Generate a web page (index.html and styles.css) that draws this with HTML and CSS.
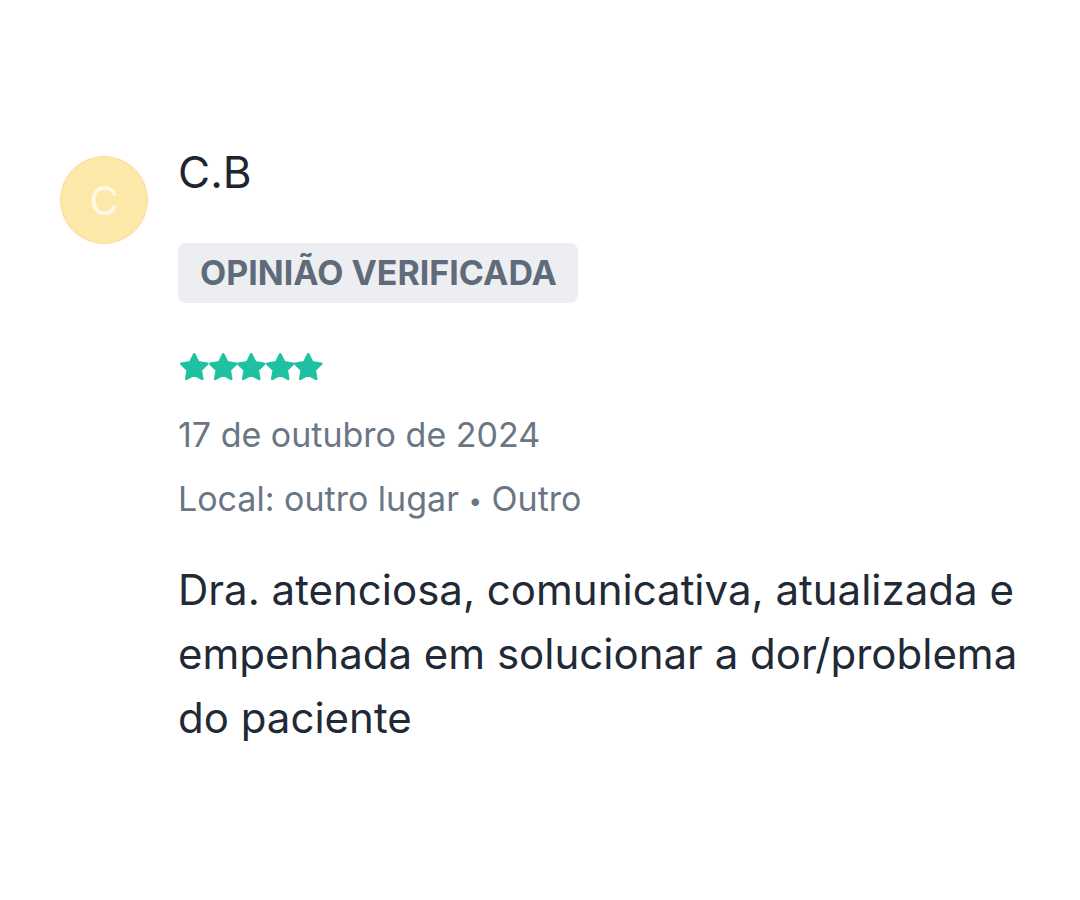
FILE: index.html
```html
<!DOCTYPE html>
<html lang="pt">
<head>
    <meta charset="UTF-8">
    <meta name="viewport" content="width=device-width, initial-scale=1.0">
    <title>Opinião</title>
    <link rel="stylesheet" href="styles.css">
</head>
<body>
    <!-- Opinião do paciente -->
    <div class="review">
        <div class="avatar">C</div>
        <div class="review-body">
            <div class="author">C.B</div>
            <div class="badge">OPINIÃO VERIFICADA</div>
            <div class="stars">
                <svg class="star" viewBox="1 1 22 22"><path d="M12 2l3.09 6.26L22 9.27l-5 4.87 1.18 6.88L12 17.77l-6.18 3.25L7 14.14 2 9.27l6.91-1.01L12 2z"/></svg>
                <svg class="star" viewBox="1 1 22 22"><path d="M12 2l3.09 6.26L22 9.27l-5 4.87 1.18 6.88L12 17.77l-6.18 3.25L7 14.14 2 9.27l6.91-1.01L12 2z"/></svg>
                <svg class="star" viewBox="1 1 22 22"><path d="M12 2l3.09 6.26L22 9.27l-5 4.87 1.18 6.88L12 17.77l-6.18 3.25L7 14.14 2 9.27l6.91-1.01L12 2z"/></svg>
                <svg class="star" viewBox="1 1 22 22"><path d="M12 2l3.09 6.26L22 9.27l-5 4.87 1.18 6.88L12 17.77l-6.18 3.25L7 14.14 2 9.27l6.91-1.01L12 2z"/></svg>
                <svg class="star" viewBox="1 1 22 22"><path d="M12 2l3.09 6.26L22 9.27l-5 4.87 1.18 6.88L12 17.77l-6.18 3.25L7 14.14 2 9.27l6.91-1.01L12 2z"/></svg>
            </div>
            <div class="meta">
                <div>17 de outubro de 2024</div>
                <div>Local: outro lugar <span class="sep">•</span> Outro</div>
            </div>
            <p class="text">Dra. atenciosa, comunicativa, atualizada e empenhada em solucionar a dor/problema do paciente</p>
        </div>
    </div>
</body>
</html>
```

FILE: styles.css
```css
/* Base */
body {
    margin: 0;
    background: #FFFFFF;
    font-family: 'Inter', 'Liberation Sans', sans-serif;
    color: #1F2A36;
}

/* Opinião */
.review {
    display: flex;
    align-items: flex-start;
    gap: 30px;
    padding: 147px 40px 0 60px;
}

.avatar {
    flex: none;
    width: 86px;
    height: 86px;
    margin-top: 9px;
    border-radius: 50%;
    background: #FCE9AA;
    border: 1px solid #F6DE9A;
    color: #FFF9E8;
    font-size: 40px;
    display: flex;
    align-items: center;
    justify-content: center;
}

.review-body {
    width: 862px;
}

.author {
    font-size: 44px;
    line-height: 50px;
    color: #1E2530;
}

.badge {
    display: inline-block;
    margin-top: 46px;
    height: 60px;
    line-height: 60px;
    padding: 0 21px 0 22px;
    border-radius: 8px;
    background: #ECEEF1;
    color: #5F6B79;
    font-size: 34px;
    font-weight: 700;
}

.stars {
    display: flex;
    margin: 50px 0 0 2px;
}

.star {
    width: 28.5px;
    height: 28.5px;
    fill: #1EC2A0;
    stroke: #1EC2A0;
    stroke-width: 2;
    stroke-linejoin: round;
}

.meta {
    margin-top: 21px;
    font-size: 34px;
    line-height: 64px;
    color: #6B7684;
}

.sep {
    font-size: 24px;
    vertical-align: 2px;
    line-height: 1;
}

.text {
    margin: 27px 0 0;
    font-size: 42px;
    line-height: 64px;
    color: #1F2A36;
}
```
